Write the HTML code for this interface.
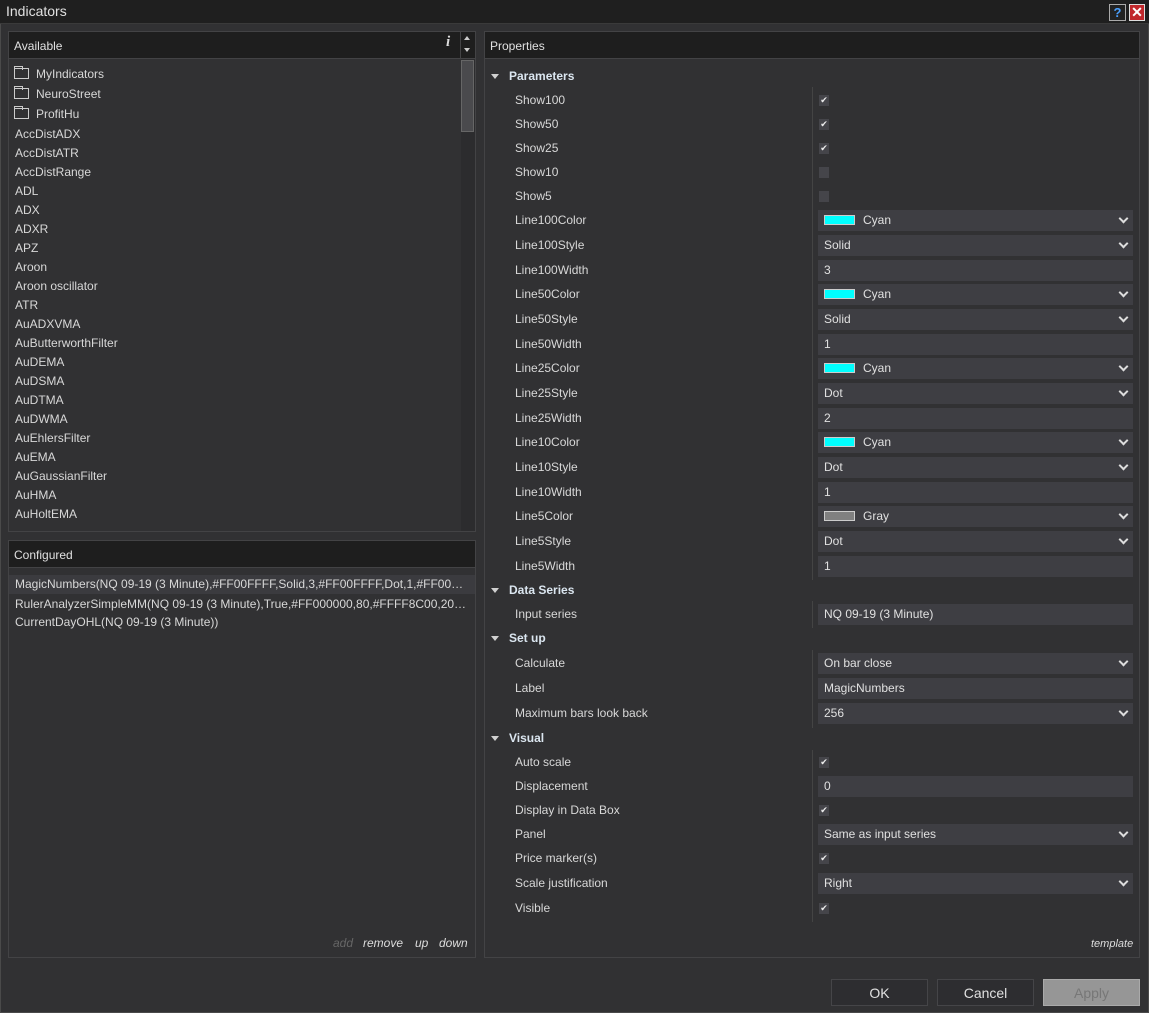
<!DOCTYPE html>
<html><head><meta charset="utf-8"><style>
*{margin:0;padding:0;box-sizing:border-box}
body{width:1149px;height:1013px;background:#313133;font-family:"Liberation Sans",sans-serif;font-size:12px;color:#d8d8d8;position:relative;overflow:hidden}
.a{position:absolute;white-space:nowrap}
.title{left:0;top:0;width:1149px;height:24px;background:#1f1f1f;border-bottom:1px solid #3a3a3a;font-size:14px;color:#e0e0e0;padding:3px 6px}
.box{border:1px solid #434345;background:#313133}
.hd{background:#1e1e1e;border-bottom:1px solid #434345;height:27px;padding:7px 5px;font-size:12px;color:#e0e0e0}
.li{left:15px;font-size:12px}
.lb{left:515px}
.sec{left:509px;font-weight:bold;color:#dbe6f0}
.tri{left:491px;width:0;height:0;border-left:4px solid transparent;border-right:4px solid transparent;border-top:5px solid #d0d0d0}
.ctl{left:818px;width:315px;height:21px;background:#3e3e43;padding:3px 6px;color:#e0e0e0}
.dd::after{content:"";position:absolute;right:6px;top:5px;width:5px;height:5px;border-right:2px solid #ddd;border-bottom:2px solid #ddd;transform:rotate(45deg)}
.sw{display:inline-block;width:31px;height:10px;border:1px solid #ccc;vertical-align:-1px;margin-right:8px}
.cb{left:819px;width:10px;height:11px;background:#45454a;color:#eee;font-size:9px;line-height:11px;text-align:center}
.btn{top:979px;width:97px;height:27px;border:1px solid #454548;background:#2d2d30;text-align:center;font-size:14px;padding-top:5px;color:#e0e0e0}
.fold{display:inline-block;width:15px;height:11px;border:1px solid #ccc;margin-right:7px;vertical-align:-1px;position:relative}
.fold::before{content:"";position:absolute;left:-1px;top:-3px;width:7px;height:3px;border:1px solid #ccc;border-bottom:none}
</style></head><body>
<div class="a" style="left:0;top:0;width:1149px;height:1013px;border:1px solid #4a4a4a"></div>
<div class="a title">Indicators</div>
<div class="a" style="left:1109px;top:4px;width:17px;height:17px;background:#222;border:1px solid #aaa;color:#4aa0ff;font-weight:bold;font-size:13px;text-align:center;line-height:15px">?</div>
<div class="a" style="left:1129px;top:4px;width:16px;height:17px;background:#c0282c;border:1px solid #ddd;color:#fff;font-weight:bold;font-size:14px;text-align:center;line-height:15px">✕</div>

<!-- Available -->
<div class="a box" style="left:8px;top:31px;width:468px;height:501px"></div>
<div class="a hd" style="left:9px;top:32px;width:466px">Available</div>
<div class="a" style="left:446px;top:34px;font-family:'Liberation Serif',serif;font-style:italic;font-weight:bold;font-size:15px;color:#ddd">i</div>
<div class="a" style="left:460px;top:32px;width:1px;height:27px;background:#434345"></div>
<div class="a" style="left:464px;top:36px;border-left:3px solid transparent;border-right:3px solid transparent;border-bottom:4px solid #ccc"></div>
<div class="a" style="left:464px;top:48px;border-left:3px solid transparent;border-right:3px solid transparent;border-top:4px solid #ccc"></div>
<div class="a" style="left:461px;top:59px;width:14px;height:472px;background:#2c2c2e"></div>
<div class="a" style="left:461px;top:60px;width:13px;height:72px;background:#4a4a4d;border:1px solid #666"></div>
<div class="a li" style="top:67px;left:14px"><span class="fold"></span>MyIndicators</div>
<div class="a li" style="top:87px;left:14px"><span class="fold"></span>NeuroStreet</div>
<div class="a li" style="top:107px;left:14px"><span class="fold"></span>ProfitHu</div>
<div class="a li" style="top:127px">AccDistADX</div>
<div class="a li" style="top:146px">AccDistATR</div>
<div class="a li" style="top:165px">AccDistRange</div>
<div class="a li" style="top:184px">ADL</div>
<div class="a li" style="top:203px">ADX</div>
<div class="a li" style="top:222px">ADXR</div>
<div class="a li" style="top:241px">APZ</div>
<div class="a li" style="top:260px">Aroon</div>
<div class="a li" style="top:279px">Aroon oscillator</div>
<div class="a li" style="top:298px">ATR</div>
<div class="a li" style="top:317px">AuADXVMA</div>
<div class="a li" style="top:336px">AuButterworthFilter</div>
<div class="a li" style="top:355px">AuDEMA</div>
<div class="a li" style="top:374px">AuDSMA</div>
<div class="a li" style="top:393px">AuDTMA</div>
<div class="a li" style="top:412px">AuDWMA</div>
<div class="a li" style="top:431px">AuEhlersFilter</div>
<div class="a li" style="top:450px">AuEMA</div>
<div class="a li" style="top:469px">AuGaussianFilter</div>
<div class="a li" style="top:488px">AuHMA</div>
<div class="a li" style="top:507px">AuHoltEMA</div>

<!-- Configured -->
<div class="a box" style="left:8px;top:540px;width:468px;height:418px"></div>
<div class="a hd" style="left:9px;top:541px;width:466px">Configured</div>
<div class="a" style="left:9px;top:575px;width:466px;height:19px;background:#3b3b3f"></div>
<div class="a li" style="top:577px">MagicNumbers(NQ 09-19 (3 Minute),#FF00FFFF,Solid,3,#FF00FFFF,Dot,1,#FF00…</div>
<div class="a li" style="top:597px">RulerAnalyzerSimpleMM(NQ 09-19 (3 Minute),True,#FF000000,80,#FFFF8C00,20…</div>
<div class="a li" style="top:615px">CurrentDayOHL(NQ 09-19 (3 Minute))</div>
<div class="a" style="left:333px;top:936px;font-style:italic;color:#666">add</div>
<div class="a" style="left:363px;top:936px;font-style:italic;color:#ddd">remove</div>
<div class="a" style="left:415px;top:936px;font-style:italic;color:#ddd">up</div>
<div class="a" style="left:439px;top:936px;font-style:italic;color:#ddd">down</div>

<!-- Properties -->
<div class="a box" style="left:484px;top:31px;width:656px;height:927px"></div>
<div class="a hd" style="left:485px;top:32px;width:654px">Properties</div>
<div class="a" style="left:812px;top:87px;width:1px;height:493px;background:#444"></div>
<div class="a" style="left:812px;top:601px;width:1px;height:27px;background:#444"></div>
<div class="a" style="left:812px;top:650px;width:1px;height:78px;background:#444"></div>
<div class="a" style="left:812px;top:750px;width:1px;height:172px;background:#444"></div>

<div class="a tri" style="top:74px"></div><div class="a sec" style="top:69px">Parameters</div>
<div class="a lb" style="top:93px">Show100</div><div class="a cb" style="top:95px">✔</div>
<div class="a lb" style="top:117px">Show50</div><div class="a cb" style="top:119px">✔</div>
<div class="a lb" style="top:141px">Show25</div><div class="a cb" style="top:143px">✔</div>
<div class="a lb" style="top:165px">Show10</div><div class="a cb" style="top:167px"></div>
<div class="a lb" style="top:189px">Show5</div><div class="a cb" style="top:191px"></div>
<div class="a lb" style="top:213px">Line100Color</div><div class="a ctl dd" style="top:210px"><span class="sw" style="background:#00ffff"></span>Cyan</div>
<div class="a lb" style="top:238px">Line100Style</div><div class="a ctl dd" style="top:235px">Solid</div>
<div class="a lb" style="top:263px">Line100Width</div><div class="a ctl" style="top:260px">3</div>
<div class="a lb" style="top:287px">Line50Color</div><div class="a ctl dd" style="top:284px"><span class="sw" style="background:#00ffff"></span>Cyan</div>
<div class="a lb" style="top:312px">Line50Style</div><div class="a ctl dd" style="top:309px">Solid</div>
<div class="a lb" style="top:337px">Line50Width</div><div class="a ctl" style="top:334px">1</div>
<div class="a lb" style="top:361px">Line25Color</div><div class="a ctl dd" style="top:358px"><span class="sw" style="background:#00ffff"></span>Cyan</div>
<div class="a lb" style="top:386px">Line25Style</div><div class="a ctl dd" style="top:383px">Dot</div>
<div class="a lb" style="top:411px">Line25Width</div><div class="a ctl" style="top:408px">2</div>
<div class="a lb" style="top:435px">Line10Color</div><div class="a ctl dd" style="top:432px"><span class="sw" style="background:#00ffff"></span>Cyan</div>
<div class="a lb" style="top:460px">Line10Style</div><div class="a ctl dd" style="top:457px">Dot</div>
<div class="a lb" style="top:485px">Line10Width</div><div class="a ctl" style="top:482px">1</div>
<div class="a lb" style="top:509px">Line5Color</div><div class="a ctl dd" style="top:506px"><span class="sw" style="background:#808080"></span>Gray</div>
<div class="a lb" style="top:534px">Line5Style</div><div class="a ctl dd" style="top:531px">Dot</div>
<div class="a lb" style="top:559px">Line5Width</div><div class="a ctl" style="top:556px">1</div>

<div class="a tri" style="top:588px"></div><div class="a sec" style="top:583px">Data Series</div>
<div class="a lb" style="top:607px">Input series</div><div class="a ctl" style="top:604px">NQ 09-19 (3 Minute)</div>

<div class="a tri" style="top:636px"></div><div class="a sec" style="top:631px">Set up</div>
<div class="a lb" style="top:656px">Calculate</div><div class="a ctl dd" style="top:653px">On bar close</div>
<div class="a lb" style="top:681px">Label</div><div class="a ctl" style="top:678px">MagicNumbers</div>
<div class="a lb" style="top:706px">Maximum bars look back</div><div class="a ctl dd" style="top:703px">256</div>

<div class="a tri" style="top:736px"></div><div class="a sec" style="top:731px">Visual</div>
<div class="a lb" style="top:755px">Auto scale</div><div class="a cb" style="top:757px">✔</div>
<div class="a lb" style="top:779px">Displacement</div><div class="a ctl" style="top:776px">0</div>
<div class="a lb" style="top:803px">Display in Data Box</div><div class="a cb" style="top:805px">✔</div>
<div class="a lb" style="top:827px">Panel</div><div class="a ctl dd" style="top:824px">Same as input series</div>
<div class="a lb" style="top:851px">Price marker(s)</div><div class="a cb" style="top:853px">✔</div>
<div class="a lb" style="top:876px">Scale justification</div><div class="a ctl dd" style="top:873px">Right</div>
<div class="a lb" style="top:901px">Visible</div><div class="a cb" style="top:903px">✔</div>
<div class="a" style="left:1091px;top:938px;font-style:italic;font-size:11px;color:#ddd">template</div>

<div class="a btn" style="left:831px">OK</div>
<div class="a btn" style="left:937px">Cancel</div>
<div class="a btn" style="left:1043px;background:#969696;border-color:#aaa;color:#777">Apply</div>
</body></html>
